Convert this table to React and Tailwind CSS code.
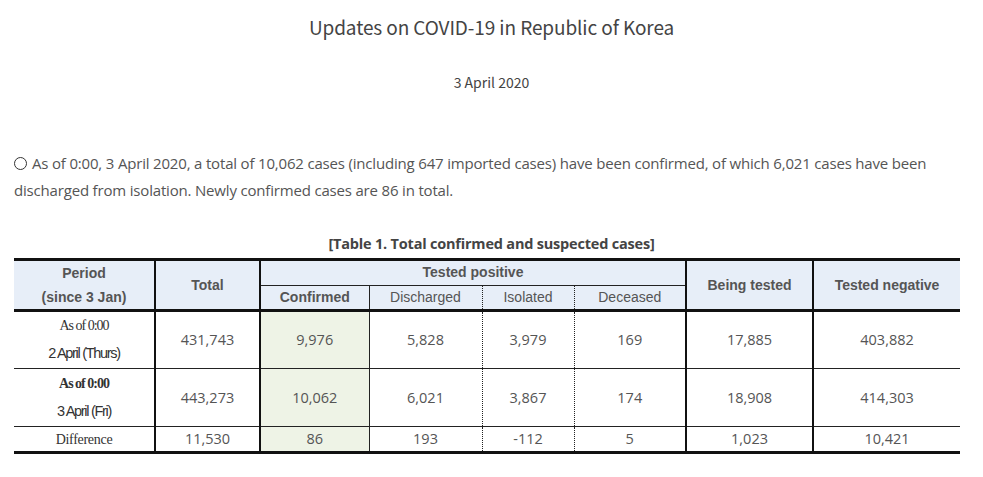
import React from 'react';

const rows = [
    {
        period: ['As of 0:00', '2 April (Thurs)'],
        bold: false,
        values: ['431,743', '9,976', '5,828', '3,979', '169', '17,885', '403,882'],
    },
    {
        period: ['As of 0:00', '3 April (Fri)'],
        bold: true,
        values: ['443,273', '10,062', '6,021', '3,867', '174', '18,908', '414,303'],
    },
];

const diff = ['11,530', '86', '193', '-112', '5', '1,023', '10,421'];

// separators on the right edge of each data column
const sepClass = [
    'border-r-2 border-r-[#111]',
    'border-r-2 border-r-[#111]',
    'border-r border-r-[#222]',
    'border-r border-r-[#222] border-dotted',
    'border-r border-r-[#222] border-dotted',
    'border-r-2 border-r-[#111]',
    'border-r-2 border-r-[#111]',
    '',
];

const Cell = ({ children, idx, className = '' }) => (
    <td
        className={`text-center align-middle p-0 ${sepClass[idx]} ${idx === 2 ? 'bg-[#eef3e6]' : ''} ${className}`}
    >
        {children}
    </td>
);

const App = () => {
    return (
        <div className="w-[983px] h-[477px] bg-white text-[#444] overflow-hidden">
            <h1 className="pt-[13px] text-center text-[19px] leading-[28px] font-normal text-[#444] font-['Noto_Sans_CJK_KR',sans-serif] tracking-[-0.1px]">
                Updates on COVID-19 in Republic of Korea
            </h1>
            <p className="mt-[31px] text-center text-[14px] leading-[20px] text-[#444] font-['Noto_Sans_CJK_KR',sans-serif]">
                3 April 2020
            </p>

            <p className="mt-[58px] pl-[14px] text-[15px] leading-[27px] text-[#555] font-['Open_Sans',sans-serif] tracking-[-0.18px]">
                <span className="inline-block w-[13px] h-[13px] rounded-full border border-[#333] align-[-1px] mr-[5px]" />
                As of 0:00, 3 April 2020, a total of 10,062 cases (including 647 imported cases) have been confirmed, of which 6,021 cases have been
                <br />
                discharged from isolation. Newly confirmed cases are 86 in total.
            </p>

            <p className="mt-[30px] text-center text-[14.5px] leading-[20px] font-bold text-[#444] font-['Open_Sans',sans-serif] tracking-[-0.2px]">
                [Table 1. Total confirmed and suspected cases]
            </p>

            <table className="ml-[14px] mt-[4px] w-[946px] table-fixed border-collapse font-['Liberation_Sans',Arial,sans-serif] text-[14px] text-[#555]">
                <colgroup>
                    <col className="w-[141px]" />
                    <col className="w-[105px]" />
                    <col className="w-[109px]" />
                    <col className="w-[113px]" />
                    <col className="w-[92px]" />
                    <col className="w-[112px]" />
                    <col className="w-[127px]" />
                    <col className="w-[147px]" />
                </colgroup>
                <thead className="bg-[#e7eef8]">
                    <tr className="h-[24px] border-t-[3px] border-t-[#111]">
                        <th rowSpan={2} className="p-0 border-r-2 border-r-[#111] font-bold leading-[24px]">
                            Period
                            <br />
                            (since 3 Jan)
                        </th>
                        <th rowSpan={2} className="p-0 border-r-2 border-r-[#111] font-bold">
                            Total
                        </th>
                        <th colSpan={4} className="p-0 leading-[23px] border-r-2 border-r-[#111] border-b border-b-[#222] font-bold">
                            Tested positive
                        </th>
                        <th rowSpan={2} className="p-0 border-r-2 border-r-[#111] font-bold">
                            Being tested
                        </th>
                        <th rowSpan={2} className="p-0 font-bold">
                            Tested negative
                        </th>
                    </tr>
                    <tr className="h-[24px] border-b-[3px] border-b-[#111]">
                        <th className="p-0 leading-[23px] border-r border-r-[#222] font-bold">Confirmed</th>
                        <th className="p-0 leading-[23px] border-r border-dotted border-r-[#222] font-normal">Discharged</th>
                        <th className="p-0 leading-[23px] border-r border-dotted border-r-[#222] font-normal">Isolated</th>
                        <th className="p-0 leading-[23px] border-r-2 border-r-[#111] font-normal">Deceased</th>
                    </tr>
                </thead>
                <tbody className="font-['Open_Sans',sans-serif] text-[14.5px] text-[#555]">
                    {rows.map((row, i) => (
                        <tr key={i} className="h-[58px] border-b border-b-[#222]">
                            <Cell idx={0}>
                                <div
                                    className={`leading-[26px] text-[14px] text-[#333] font-['Liberation_Serif',serif] tracking-[-1px] ${row.bold ? 'font-bold' : ''}`}
                                >
                                    {row.period[0]}
                                </div>
                                <div className="leading-[28px] text-[14.5px] text-[#333] font-['Liberation_Sans',sans-serif] tracking-[-1.3px]">
                                    {row.period[1]}
                                </div>
                            </Cell>
                            {row.values.map((v, j) => (
                                <Cell key={j} idx={j + 1}>
                                    {v}
                                </Cell>
                            ))}
                        </tr>
                    ))}
                    <tr className="h-[26px] border-b-[3px] border-b-[#111]">
                        <Cell idx={0}>
                            <span className="text-[14px] text-[#333] font-['Liberation_Serif',serif] tracking-[-0.3px]">
                                Difference
                            </span>
                        </Cell>
                        {diff.map((v, j) => (
                            <Cell key={j} idx={j + 1}>
                                {v}
                            </Cell>
                        ))}
                    </tr>
                </tbody>
            </table>
        </div>
    );
};

export default App;
